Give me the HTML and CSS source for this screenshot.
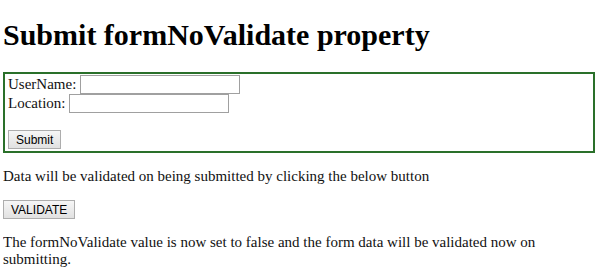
FILE: index.html
```html
<!DOCTYPE html>
<html lang="en">
<head>
  <meta charset="UTF-8">
  <title>formNoValidate</title>
  <link rel="stylesheet" href="styles.css">
</head>
<body>
  <h1>Submit formNoValidate property</h1>
  <form class="demo-form" action="#">
    UserName: <input type="text" name="usrN"><br>
    Location: <input type="text" name="Loc"><br><br>
    <input type="submit" class="btn" value="Submit" formnovalidate>
  </form>
  <p>Data will be validated on being submitted by clicking the below button</p>
  <button class="btn" type="button">VALIDATE</button>
  <p>The formNoValidate value is now set to false and the form data will be validated now on submitting.</p>
</body>
</html>
```

FILE: styles.css
```css
body {
  font-family: "Liberation Serif", "Times New Roman", serif;
  font-size: 15px;
  margin: 3px;
  color: #111;
}
h1 {
  font-size: 30px;
  margin: 15px 0 20px;
  color: #000;
}
.demo-form {
  border: 2px solid #2a702a;
  padding: 1px 3px 2px;
  margin-right: 2px;
}
input[type="text"] {
  box-sizing: border-box;
  width: 160px;
  height: 19px;
  font-size: 12px;
  border: 1px solid #a0a0a0;
  padding: 1px 2px;
  margin: 0;
}
.btn {
  box-sizing: border-box;
  height: 19px;
  font-family: "Liberation Sans", Arial, sans-serif;
  font-size: 12px;
  color: #000;
  background: linear-gradient(#f6f6f6, #e1e1e1);
  border: 1px solid #adadad;
  border-radius: 0;
  padding: 0 7px;
  margin: 0;
}
p {
  margin: 15px 0;
}
```
